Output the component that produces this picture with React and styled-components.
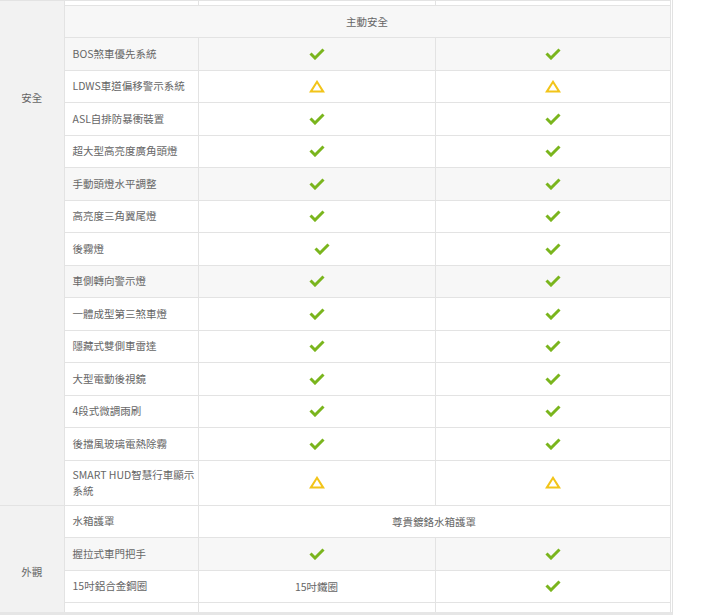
import styled, { createGlobalStyle } from "styled-components";

const GlobalStyle = createGlobalStyle`
  html, body { margin: 0; padding: 0; background: #fff; overflow: hidden; }
  body { font-family: "Noto Sans CJK TC", "Noto Sans", sans-serif; }
`;

const Frame = styled.div`
  width: 670px;
  height: 612px;
  overflow: hidden;
  padding-right: 2px;
  border-right: 1px solid #e2e2e2;
  border-bottom: 3px solid #e6e6e6;
`;

const Table = styled.table`
  width: 670px;
  table-layout: fixed;
  border-collapse: collapse;
  font-size: 10.5px;
  color: #666;
`;

const Row = styled.tr`
  height: ${(p) => p.$h || 32.5}px;
  background: ${(p) => (p.$shade ? "#f7f7f7" : "#fff")};
`;

const CatCell = styled.td`
  background: #f2f2f2;
  border: 1px solid #e3e3e3;
  border-left: none;
  vertical-align: top;
  text-align: center;
  padding: ${(p) => p.$top}px 0 0;
  line-height: 14px;
`;

const Label = styled.td`
  border: 1px solid #e3e3e3;
  padding: 0 2px 0 8px;
  line-height: 16px;
`;

const Cell = styled.td`
  border: 1px solid #e3e3e3;
  text-align: center;
  vertical-align: middle;
  padding: 0 0 0 ${(p) => p.$nudge || 0}px;
`;

const Mark = styled.svg`
  display: block;
  margin: 0 auto;
`;

const Check = () => (
  <Mark width="16" height="12" viewBox="0 0 16 12">
    <path d="M1.5 5.5 L6 10 L14.5 1.5" fill="none" stroke="#7ab51d" strokeWidth="3" strokeLinejoin="miter" />
  </Mark>
);

const Tri = () => (
  <Mark width="16" height="13" viewBox="0 0 16 13">
    <path d="M8 1.8 L14.2 11.6 L1.8 11.6 Z" fill="none" stroke="#f2c419" strokeWidth="2" strokeLinejoin="miter" />
  </Mark>
);

const renderMark = (v) => (v === "c" ? <Check /> : v === "t" ? <Tri /> : v);

const safety = [
  ["BOS煞車優先系統", "c", "c", true],
  ["LDWS車道偏移警示系統", "t", "t"],
  ["ASL自排防暴衝裝置", "c", "c"],
  ["超大型高亮度廣角頭燈", "c", "c"],
  ["手動頭燈水平調整", "c", "c", true],
  ["高亮度三角翼尾燈", "c", "c"],
  ["後霧燈", "c", "c", false, 10],
  ["車側轉向警示燈", "c", "c", true],
  ["一體成型第三煞車燈", "c", "c"],
  ["隱藏式雙側車雷達", "c", "c"],
  ["大型電動後視鏡", "c", "c"],
  ["4段式微調雨刷", "c", "c"],
  ["後擋風玻璃電熱除霧", "c", "c"],
];

export default function App() {
  return (
    <>
      <GlobalStyle />
      <Frame>
        <Table>
          <colgroup>
            <col style={{ width: 64 }} />
            <col style={{ width: 134 }} />
            <col style={{ width: 237 }} />
            <col style={{ width: 235 }} />
          </colgroup>
          <tbody>
            <Row $h={5}>
              <CatCell rowSpan={16} $top={90}>安全</CatCell>
              <Label />
              <Cell />
              <Cell />
            </Row>
            <Row $h={32} $shade>
              <Cell colSpan={3}>主動安全</Cell>
            </Row>
            {safety.map(([name, a, b, shade, nudge]) => (
              <Row key={name} $shade={shade}>
                <Label>{name}</Label>
                <Cell $nudge={nudge}>{renderMark(a)}</Cell>
                <Cell>{renderMark(b)}</Cell>
              </Row>
            ))}
            <Row $h={45}>
              <Label>SMART HUD智慧行車顯示系統</Label>
              <Cell>{renderMark("t")}</Cell>
              <Cell>{renderMark("t")}</Cell>
            </Row>
            <Row>
              <CatCell rowSpan={5} $top={59}>外觀</CatCell>
              <Label>水箱護罩</Label>
              <Cell colSpan={2}>尊貴鍍鉻水箱護罩</Cell>
            </Row>
            <Row $shade>
              <Label>握拉式車門把手</Label>
              <Cell>{renderMark("c")}</Cell>
              <Cell>{renderMark("c")}</Cell>
            </Row>
            <Row>
              <Label>15吋鋁合金鋼圈</Label>
              <Cell>15吋鐵圈</Cell>
              <Cell>{renderMark("c")}</Cell>
            </Row>
            <Row>
              <Label />
              <Cell />
              <Cell />
            </Row>
          </tbody>
        </Table>
      </Frame>
    </>
  );
}
